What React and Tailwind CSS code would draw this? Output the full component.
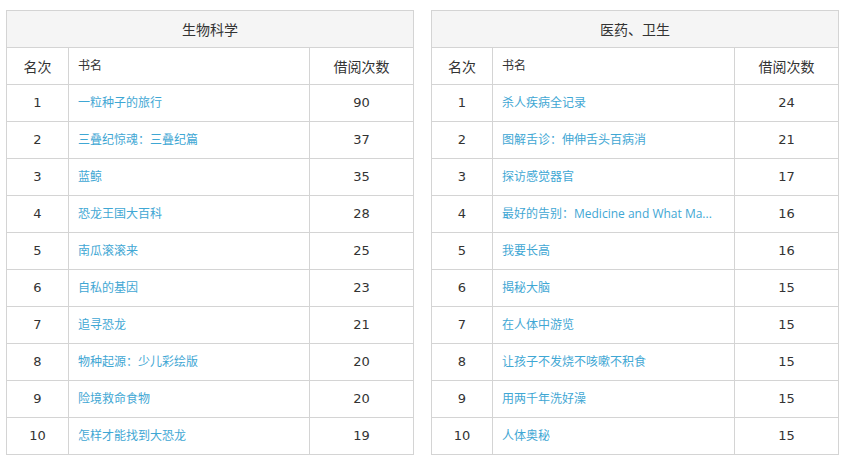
import React from 'react';

const tables = [
    {
        title: '生物科学',
        rows: [
            ['一粒种子的旅行', 90],
            ['三叠纪惊魂：三叠纪篇', 37],
            ['蓝鲸', 35],
            ['恐龙王国大百科', 28],
            ['南瓜滚滚来', 25],
            ['自私的基因', 23],
            ['追寻恐龙', 21],
            ['物种起源：少儿彩绘版', 20],
            ['险境救命食物', 20],
            ['怎样才能找到大恐龙', 19],
        ],
    },
    {
        title: '医药、卫生',
        rows: [
            ['杀人疾病全记录', 24],
            ['图解舌诊：伸伸舌头百病消', 21],
            ['探访感觉器官', 17],
            ['最好的告别：Medicine and What Ma...', 16],
            ['我要长高', 16],
            ['揭秘大脑', 15],
            ['在人体中游览', 15],
            ['让孩子不发烧不咳嗽不积食', 15],
            ['用两千年洗好澡', 15],
            ['人体奥秘', 15],
        ],
    },
];

const num = { fontFamily: '"DejaVu Sans", "Noto Sans CJK SC", sans-serif' };

const RankTable = ({ title, rows, first }) => (
    <table className="w-[407px] border-collapse table-fixed text-[#333]">
        <colgroup>
            <col className={first ? 'w-[62px]' : 'w-[61px]'} />
            <col className={first ? 'w-[241px]' : 'w-[242px]'} />
            <col className={first ? 'w-[104px]' : 'w-[104px]'} />
        </colgroup>
        <thead>
            <tr className="h-[37px]">
                <th colSpan={3} className="border border-[#d4d4d4] bg-[#f5f5f5] text-[14px] font-normal text-center">
                    {title}
                </th>
            </tr>
            <tr className="h-[37px]">
                <th className="border border-[#d4d4d4] text-[14px] font-normal text-center">名次</th>
                <th className="border border-[#d4d4d4] text-[12px] font-normal text-left pl-[9px]">书名</th>
                <th className="border border-[#d4d4d4] text-[14px] font-normal text-center">借阅次数</th>
            </tr>
        </thead>
        <tbody>
            {rows.map(([name, count], i) => (
                <tr key={i} className="h-[37px]">
                    <td className="border border-[#d4d4d4] text-[13px] text-center" style={num}>{i + 1}</td>
                    <td className="border border-[#d4d4d4] pl-[9px] pr-[6px] text-[12px] text-[#3fa7d4] whitespace-nowrap">
                        {name}
                    </td>
                    <td className="border border-[#d4d4d4] text-[13px] text-center" style={num}>{count}</td>
                </tr>
            ))}
        </tbody>
    </table>
);

export default function App() {
    return (
        <div
            className="w-[850px] h-[465px] bg-white flex items-start gap-[17px] pl-[6px] pt-[10px]"
            style={{ fontFamily: '"Open Sans", "Noto Sans CJK SC", sans-serif' }}
        >
            {tables.map((t, i) => (
                <RankTable key={t.title} title={t.title} rows={t.rows} first={i === 0} />
            ))}
        </div>
    );
}
